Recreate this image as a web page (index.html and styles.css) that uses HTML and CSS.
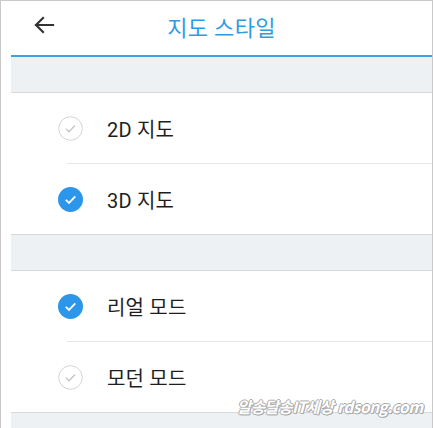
FILE: index.html
```html
<!DOCTYPE html>
<html lang="ko">
<head>
<meta charset="utf-8">
<link rel="stylesheet" href="styles.css">
</head>
<body>
<div class="frame">
  <div class="inner">
    <header class="topbar">
      <svg class="back" width="22" height="18" viewBox="0 0 22 18"><path d="M20 9H3M10 2L3 9l7 7" fill="none" stroke="#333" stroke-width="2.2" stroke-linecap="square"/></svg>
      <h1 class="title">지도 스타일</h1>
    </header>
    <div class="band"></div>
    <ul class="list">
      <li class="row"><span class="check"><svg width="25" height="25" viewBox="0 0 25 25"><circle cx="12.5" cy="12.5" r="11.8" fill="#fff" stroke="#d4d4d4" stroke-width="1"/><path d="M8 12.8l3 3 6-6.3" fill="none" stroke="#c4c4c4" stroke-width="1.3"/></svg></span><span class="label">2D 지도</span></li>
      <li class="row"><span class="check"><svg width="25" height="25" viewBox="0 0 25 25"><circle cx="12.5" cy="12.5" r="12.5" fill="#2b96ea"/><path d="M7.8 12.8l3.2 3.1 6.3-6.5" fill="none" stroke="#fff" stroke-width="1.8"/></svg></span><span class="label">3D 지도</span></li>
    </ul>
    <div class="band mid"></div>
    <ul class="list">
      <li class="row"><span class="check"><svg width="25" height="25" viewBox="0 0 25 25"><circle cx="12.5" cy="12.5" r="12.5" fill="#2b96ea"/><path d="M7.8 12.8l3.2 3.1 6.3-6.5" fill="none" stroke="#fff" stroke-width="1.8"/></svg></span><span class="label">리얼 모드</span></li>
      <li class="row"><span class="check"><svg width="25" height="25" viewBox="0 0 25 25"><circle cx="12.5" cy="12.5" r="11.8" fill="#fff" stroke="#d4d4d4" stroke-width="1"/><path d="M8 12.8l3 3 6-6.3" fill="none" stroke="#c4c4c4" stroke-width="1.3"/></svg></span><span class="label">모던 모드</span></li>
    </ul>
    <div class="band end"></div>
  </div>
  <div class="watermark">알송달송IT세상 rdsong.com</div>
</div>
</body>
</html>
```
FILE: styles.css
```css
* { box-sizing: border-box; }
html, body { margin: 0; padding: 0; background: #fff; }
body { font-family: Roboto, "Noto Sans CJK KR", sans-serif; }
.frame {
  position: relative;
  width: 433px;
  height: 428px;
  border: 1px solid #c9c9c9;
  border-bottom: none;
  overflow: hidden;
  background: #fff;
}
.inner {
  margin-left: 10px;
  width: 421px;
}
.topbar {
  height: 56px;
  display: flex;
  align-items: center;
  justify-content: center;
  position: relative;
  border-bottom: 2px solid #3da2e2;
}
.back {
  position: absolute;
  left: 22px;
  top: 15px;
}
.title {
  margin: -4px 0 0;
  font-size: 22px;
  font-weight: 400;
  color: #2e9ce2;
  letter-spacing: 0.3px;
}
.band {
  height: 36px;
  background: #eef1f3;
  border-bottom: 1px solid #d6d9db;
}
.band.mid {
  height: 37px;
  border-top: 1px solid #d6d9db;
}
.band.end {
  height: 20px;
  border-top: 1px solid #d6d9db;
  border-bottom: none;
}
.list {
  list-style: none;
  margin: 0;
  padding: 0;
}
.row {
  height: 70px;
  display: flex;
  align-items: center;
  padding-left: 47px;
  position: relative;
}
.row + .row {
  height: 71px;
  padding-top: 1px;
}
.row + .row::after {
  content: "";
  position: absolute;
  left: 56px;
  right: 0;
  top: 0;
  height: 1px;
  background: #e6e6e6;
}
.check { display: flex; width: 25px; height: 25px; }
.label {
  margin-left: 24px;
  font-size: 20px;
  color: #1e1e1e;
  letter-spacing: 0.2px;
}
.watermark {
  position: absolute;
  left: 236px;
  top: 394px;
  font-family: "Noto Sans CJK KR", sans-serif;
  font-size: 15.5px;
  font-weight: 700;
  font-style: italic;
  color: #fff;
  letter-spacing: -0.5px;
  text-shadow: 1px 0 0 #aaa, -1px 0 0 #aaa, 0 1px 0 #aaa, 0 -1px 0 #aaa, 1px 1px 0 #aaa;
  white-space: nowrap;
}
```
